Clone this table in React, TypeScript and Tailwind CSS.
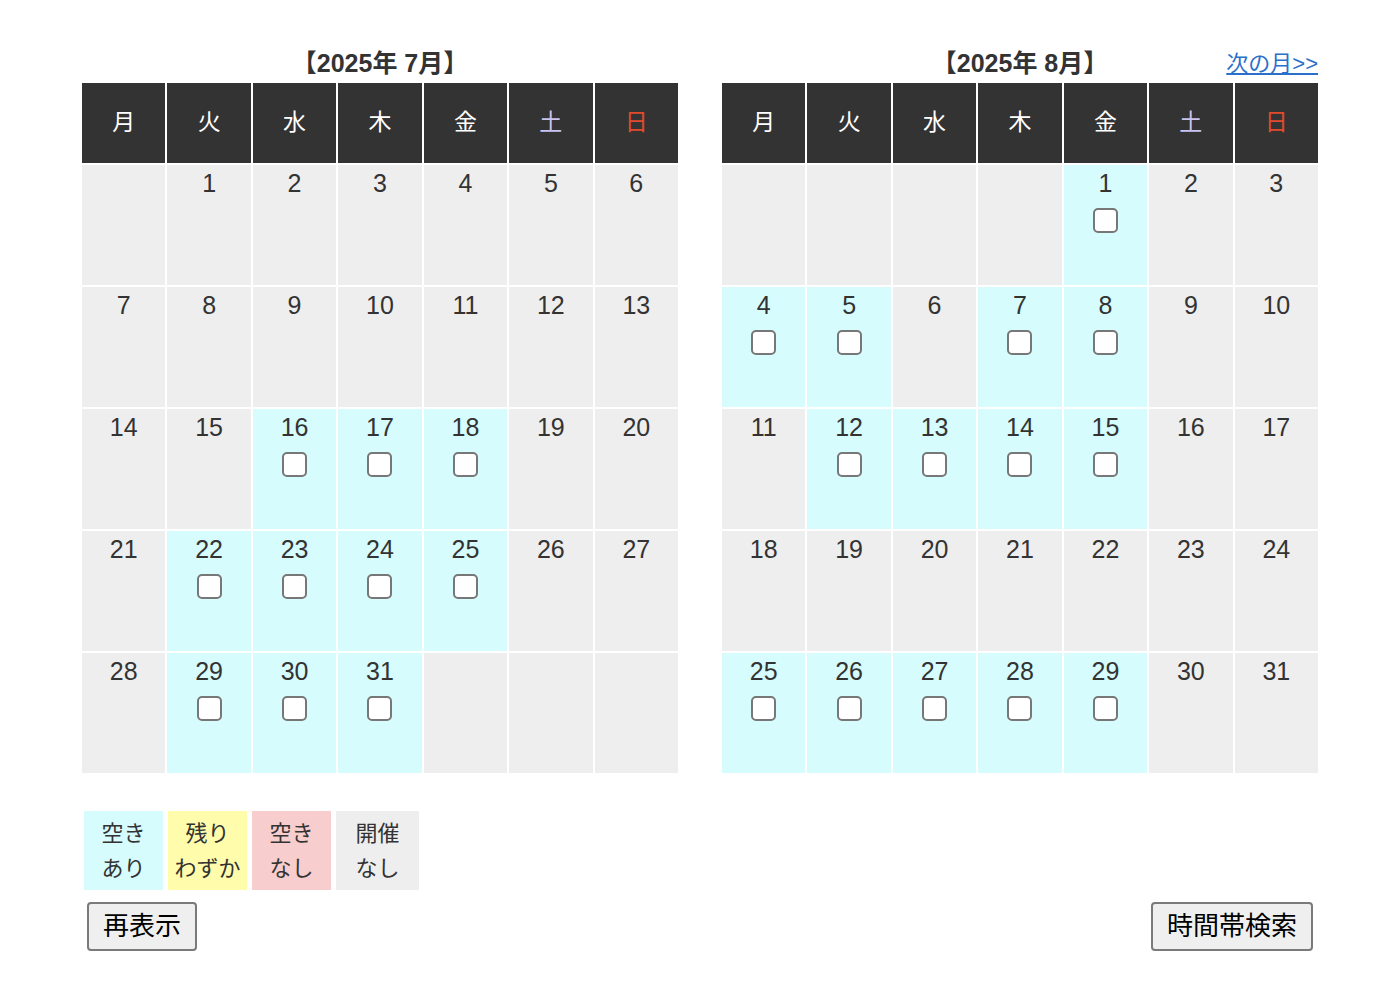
const weekdays = ["月", "火", "水", "木", "金", "土", "日"];

type Month = {
  title: string;
  offset: number;
  days: number;
  open: number[];
};

const months: Month[] = [
  {
    title: "【2025年 7月】",
    offset: 1,
    days: 31,
    open: [16, 17, 18, 22, 23, 24, 25, 29, 30, 31],
  },
  {
    title: "【2025年 8月】",
    offset: 4,
    days: 31,
    open: [1, 4, 5, 7, 8, 12, 13, 14, 15, 25, 26, 27, 28, 29],
  },
];

const font = "font-['Liberation_Sans','Noto_Sans_CJK_JP',sans-serif]";

const Calendar = ({ month, next }: { month: Month; next?: boolean }) => {
  const cells: (number | null)[] = [];
  for (let i = 0; i < month.offset; i++) cells.push(null);
  for (let d = 1; d <= month.days; d++) cells.push(d);
  while (cells.length % 7 !== 0) cells.push(null);

  return (
    <div className="w-[596px]">
      <div className="relative h-[40px] flex items-center justify-center">
        <h2 className="text-[25px] leading-[40px] font-bold text-[#333]">{month.title}</h2>
        {next && (
          <a href="#" className="absolute right-0 top-[1px] text-[22px] leading-[40px] text-[#2a6fc9] underline">
            次の月&gt;&gt;
          </a>
        )}
      </div>
      <div className="grid grid-cols-7 gap-[2px]">
        {weekdays.map((w, i) => (
          <div
            key={w}
            className={
              "h-[80px] pb-[1px] bg-[#333333] flex items-center justify-center text-[23px] " +
              (i === 5 ? "text-[#c9c3ef]" : i === 6 ? "text-[#e24a2c]" : "text-white")
            }
          >
            {w}
          </div>
        ))}
        {cells.map((d, i) => {
          const open = d !== null && month.open.includes(d);
          return (
            <div
              key={i}
              className={"h-[120px] pt-[4px] flex flex-col items-center " + (open ? "bg-[#d7fcfd]" : "bg-[#eeeeee]")}
            >
              {d !== null && <span className="text-[25px] leading-[28px] text-[#333]">{d}</span>}
              {open && (
                <span className="mt-[11px] w-[25px] h-[25px] rounded-[5px] border-2 border-[#777] bg-white" />
              )}
            </div>
          );
        })}
      </div>
    </div>
  );
};

const legend = [
  { a: "空き", b: "あり", bg: "bg-[#d7fcfd]", w: "w-[79px]" },
  { a: "残り", b: "わずか", bg: "bg-[#fffdab]", w: "w-[79px]" },
  { a: "空き", b: "なし", bg: "bg-[#f8cdcd]", w: "w-[79px]" },
  { a: "開催", b: "なし", bg: "bg-[#eeeeee]", w: "w-[83px]" },
];

export default function App() {
  return (
    <div className={"min-h-[994px] bg-white pt-[43px] pl-[82px] pr-[70px] " + font}>
      <div className="flex gap-[44px]">
        <Calendar month={months[0]} />
        <Calendar month={months[1]} next />
      </div>
      <div className="mt-[38px] flex gap-[5px] pl-[2px]">
        {legend.map((l, i) => (
          <div
            key={i}
            className={"h-[79px] flex flex-col items-center justify-center text-[22px] leading-[35px] text-[#333] " + l.bg + " " + l.w}
          >
            <span>{l.a}</span>
            <span>{l.b}</span>
          </div>
        ))}
      </div>
      <div className="mt-[12px] flex justify-between px-[5px]">
        <button className="h-[49px] pb-[1px] px-[14px] text-[26px] text-black bg-[#efefef] border-2 border-[#7a7a7a] rounded-[4px]">
          再表示
        </button>
        <button className="h-[49px] pb-[1px] px-[14px] text-[26px] text-black bg-[#efefef] border-2 border-[#7a7a7a] rounded-[4px]">
          時間帯検索
        </button>
      </div>
    </div>
  );
}
